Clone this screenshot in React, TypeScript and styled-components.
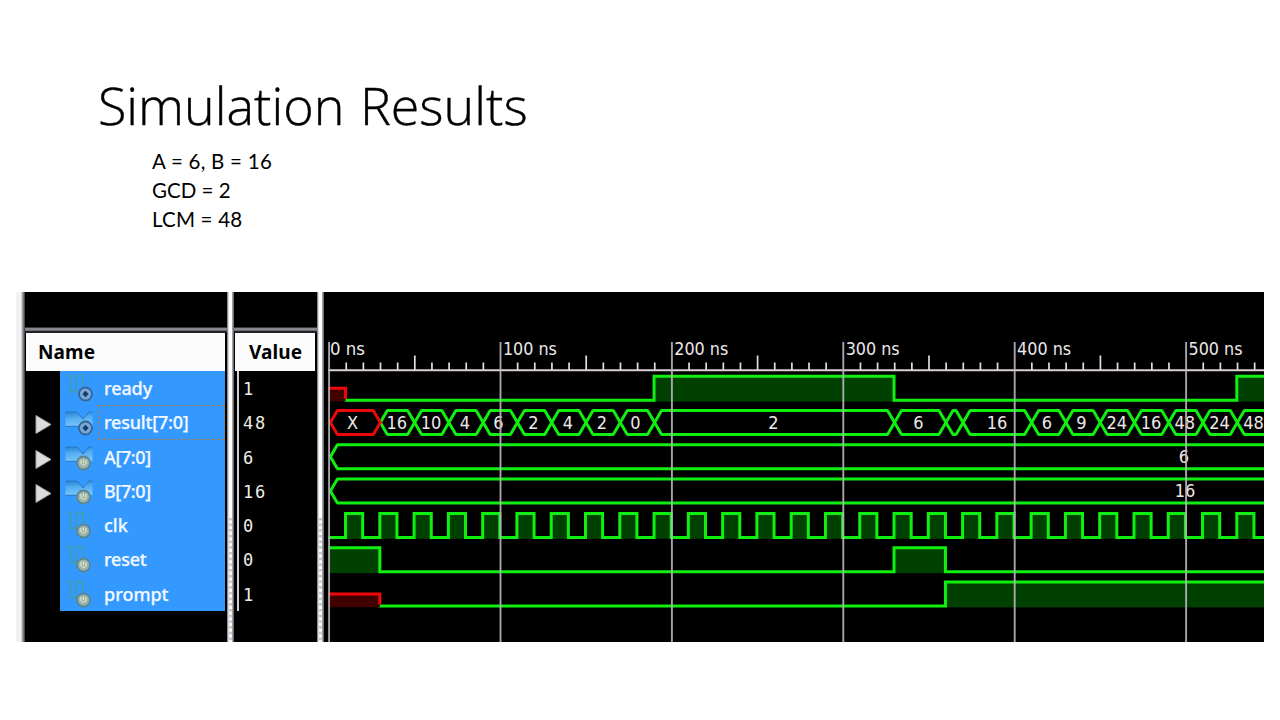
import React from "react";
import styled, { createGlobalStyle } from "styled-components";

const GlobalStyle = createGlobalStyle`
  body { margin: 0; background: #fff; }
  * { box-sizing: border-box; }
`;

const Slide = styled.main`
  width: 1280px;
  height: 720px;
  overflow: hidden;
  display: flex;
  flex-direction: column;
  background: #fff;
  color: #000;
`;

const Heading = styled.header`
  height: 292px;
  flex: none;
  padding: 70px 0 0 98px;
`;

const Title = styled.h1`
  margin: 0;
  font: 300 52px/70px "Open Sans", sans-serif;
  word-spacing: 2px;
  -webkit-text-stroke: 0.4px #000;
  white-space: nowrap;
`;

const Facts = styled.div`
  padding: 7px 0 0 54px;
  font: 400 20.5px/29px Lato, sans-serif;
  font-variant-ligatures: none;
  white-space: nowrap;
`;

const Fact = styled.div<{ $spacing: number }>`
  letter-spacing: ${(p) => p.$spacing}px;
  width: max-content;
`;

const Simulator = styled.section`
  display: grid;
  grid-template-columns: 9px 202px 7px 83px 7px 940px;
  width: 1248px;
  height: 350px;
  margin-left: 16px;
  background: #000;
  overflow: hidden;
`;

const Edge = styled.div`
  background: linear-gradient(90deg, #f2f2f2 0 5px, #b4b4b8 6px, #77777c 7.5px, #77777c 8px, #1c1c20 9px);
`;

const Splitter = styled.div`
  display: flex;
  flex-direction: column;
  justify-content: flex-end;
  padding: 0 2px 0 2px;
  background: linear-gradient(90deg, #66666e 0, #b0b0b8 1px, #fff 2px, #fff calc(100% - 2.5px), #a0a0a8 calc(100% - 1.5px), #55555c 100%);
`;

const Grip = styled.div`
  height: 124px;
  background: repeating-linear-gradient(180deg, #c8c8cc 0 1.5px, #f8f8f8 3px 5px, #dcdce0 5.7px);
`;

const Column = styled.div`
  display: flex;
  flex-direction: column;
`;

const ColumnTop = styled.div`
  height: 41px;
  flex: none;
  border-bottom: 2px solid #202024;
  background: linear-gradient(180deg, #000 0 35px, #77777c 36px, #96969c 37px, #606066 39px);
`;

const ColumnHeader = styled.div<{ $inset: number; $spacing: number }>`
  height: 38px;
  flex: none;
  margin: 0 2px 0 1.4px;
  padding-left: ${(p) => p.$inset}px;
  background: #fcfcfc;
  font: 700 19px/38px "Noto Sans", sans-serif;
  letter-spacing: ${(p) => p.$spacing}px;
`;

const NameRows = styled.div`
  display: flex;
  flex-direction: column;
  height: 240px;
`;

const NameRow = styled.div`
  display: grid;
  grid-template-columns: 35px 38px 1fr;
  grid-template-rows: 34.3px;
  height: 34.3px;
  margin-right: 2px;
`;

const Expander = styled.div`
  display: flex;
  align-items: center;
  padding: 5px 0 0 9.5px;
`;

const IconCell = styled.div`
  padding-left: 4px;
  background: #3399ff;
`;

const SignalName = styled.div<{ $focused?: boolean; $spacing: number }>`
  padding: 1px 0 0 6px;
  background: #3399ff;
  color: #f2f8ff;
  font: 500 18px/32px "Noto Sans", sans-serif;
  letter-spacing: ${(p) => p.$spacing}px;
  -webkit-text-stroke: 0.25px #f2f8ff;
  outline: ${(p) => (p.$focused ? "1px dashed #a87c50" : "none")};
  outline-offset: -1px;
`;

const ValueRows = styled.div`
  display: flex;
  flex-direction: column;
  height: 240px;
  margin-left: 3px;
  border-left: 2px solid #d0d0d0;
`;

const ValueRow = styled.div`
  height: 34.3px;
  padding-left: 4px;
  color: #f0ece4;
  font: 400 17px/36px "DejaVu Sans Mono", monospace;
  letter-spacing: 1.8px;
`;

const Chart = styled.svg`
  display: block;
  width: 940px;
  height: 350px;
`;

const ChartText = styled.text`
  fill: #ece8e8;
  font: 400 18px "DejaVu Sans Condensed", "DejaVu Sans", sans-serif;
`;

type Signal = { name: string; value: string; bus?: boolean; out?: boolean; spacing: number };

const signals: Signal[] = [
  { name: "ready", value: "1", out: true, spacing: -0.1 },
  { name: "result[7:0]", value: "48", bus: true, out: true, spacing: -0.2 },
  { name: "A[7:0]", value: "6", bus: true, spacing: -0.4 },
  { name: "B[7:0]", value: "16", bus: true, spacing: -0.4 },
  { name: "clk", value: "0", spacing: 0 },
  { name: "reset", value: "0", spacing: -0.2 },
  { name: "prompt", value: "1", spacing: 0 },
];

const Glyph = styled.svg`
  display: block;
`;

const Arrow = () => (
  <Glyph width="18" height="21" viewBox="0 0 18 21">
    <path d="M1 1.5L16 10.5L1 19.5Z" fill="#dcdcdc" stroke="#a4a4a4" strokeWidth="1" />
  </Glyph>
);

const SignalIcon = ({ bus, out }: { bus?: boolean; out?: boolean }) => (
  <Glyph width="30" height="34" viewBox="0 0 30 34">
    <defs>
      <linearGradient id="busFill" x1="0" y1="0" x2="0.15" y2="1">
        <stop offset="0" stopColor="#2580d2" />
        <stop offset="0.45" stopColor="#52acf2" />
        <stop offset="1" stopColor="#78c2f8" />
      </linearGradient>
    </defs>
    {bus ? (
      <>
        <path d="M1.5 7H13L19 14L25 7H28.5V21H22L18 17L14 21H1.5Z" fill="url(#busFill)" />
        <path d="M1.5 7H13L19 14L25 7H28.5M1.5 21.3H14" fill="none" stroke="#2879c2" strokeWidth="1" />
      </>
    ) : (
      <path d="M2 4.7H6.5V20.5H12V4.7H19V15" fill="none" stroke="#419db4" strokeWidth="1.8" />
    )}
    <circle cx={out ? 21.5 : 19.5} cy="23" r="6.5" fill={out ? "#78a8da" : "#9ab4ac"} stroke={out ? "#366694" : "#5a8694"} strokeWidth="1.8" />
    {out ? (
      <path d="M21.5 19.8L24.7 23L21.5 26.2L18.3 23Z" fill="#183c64" />
    ) : (
      <path d="M17 20V23.5Q19.5 27 22 23.5V20M19.5 19.5V23" fill="none" stroke="#e0e6c8" strokeWidth="1.2" />
    )}
  </Glyph>
);

const LEFT = 324;
const TOP = 292;
const PX = 1.714;
const GREEN = "#10f010";
const FILL = "#004000";
const END = 550;

const px = (t: number) => 328.4 - LEFT + t * PX;
const rowTop = (row: number) => 376.2 - TOP + row * 34.3;

/* Digital trace: list of [time, level] changes, running on to the chart's end. */
const Trace = ({ row, steps }: { row: number; steps: [number, number][] }) => {
  const high = rowTop(row);
  const low = high + 24;
  let d = "";
  steps.forEach(([t, level], i) => {
    const y = level ? high : low;
    const next = i + 1 < steps.length ? steps[i + 1][0] : END;
    d += `${i ? "L" : "M"}${px(t)} ${y}L${px(next)} ${y}`;
  });
  return (
    <g>
      {steps.map(([t, level], i) =>
        level ? (
          <rect key={i} x={px(t)} y={high} width={px(i + 1 < steps.length ? steps[i + 1][0] : END) - px(t)} height={25.4} fill={FILL} />
        ) : null
      )}
      <path d={d} fill="none" stroke={GREEN} strokeWidth="3" />
    </g>
  );
};

const Unknown = ({ row, until }: { row: number; until: number }) => {
  const y = rowTop(row) + 12;
  return (
    <g>
      <rect x={px(0)} y={y} width={px(until) - px(0)} height={13.2} fill="#400000" />
      <path d={`M${px(0)} ${y}H${px(until)}V${y + 10.6}`} fill="none" stroke="#f00808" strokeWidth="3" />
    </g>
  );
};

const Bus = ({ row, from, to, color = GREEN }: { row: number; from: number; to: number; color?: string }) => {
  const y = rowTop(row);
  const a = px(from) + (from ? 0.5 : 2);
  const b = px(to) + 0.5;
  const s = Math.min(7, (b - a) / 2);
  return (
    <path
      d={`M${a} ${y + 12}L${a + s} ${y}H${b - s}L${b} ${y + 12}L${b - s} ${y + 24}H${a + s}Z`}
      fill="none"
      stroke={color}
      strokeWidth="3"
      strokeLinejoin="bevel"
    />
  );
};

const resultSegments: [number, number, string, number][] = [
  [0, 30, "X", 352.5],
  [30, 50, "16", 396.8],
  [50, 70, "10", 431],
  [70, 90, "4", 465],
  [90, 110, "6", 498.5],
  [110, 130, "2", 533.5],
  [130, 150, "4", 568],
  [150, 170, "2", 602],
  [170, 190, "0", 635.5],
  [190, 330, "2", 773.5],
  [330, 360, "6", 918.5],
  [360, 370, "", 0],
  [370, 410, "16", 997],
  [410, 430, "6", 1047],
  [430, 450, "9", 1081.5],
  [450, 470, "24", 1116.8],
  [470, 490, "16", 1151],
  [490, 510, "48", 1184.8],
  [510, 530, "24", 1219.5],
  [530, 560, "48", 1253.5],
];

const clock: [number, number][] = Array.from({ length: 55 }, (_, i) => [i * 10, i % 2] as [number, number]);

const Label = ({ x, row, children }: { x: number; row: number; children: string }) => (
  <ChartText x={x - LEFT} y={rowTop(row) + 18.3} textAnchor="middle">
    {children}
  </ChartText>
);

const Waveforms = () => (
  <Chart viewBox="0 0 940 350">
    {[0, 100, 200, 300, 400, 500].map((t) => (
      <ChartText key={t} x={(t ? 331.5 : 330) - LEFT + t * PX} y="63" textLength={t ? 54 : 35} lengthAdjust="spacingAndGlyphs">
        {`${t} ns`}
      </ChartText>
    ))}
    <Trace row={0} steps={[[9, 0], [190, 1], [330, 0], [530, 1]]} />
    <Unknown row={0} until={10} />
    {resultSegments.slice(1).map(([from, to]) => (
      <Bus key={from} row={1} from={from} to={to} />
    ))}
    <Bus row={1} from={0} to={30} color="#f00808" />
    <Bus row={2} from={0} to={600} />
    <Bus row={3} from={0} to={600} />
    <Trace row={4} steps={clock} />
    <Trace row={5} steps={[[0, 1], [30, 0], [330, 1], [360, 0]]} />
    <Trace row={6} steps={[[29, 0], [360, 1]]} />
    <Unknown row={6} until={30} />
    {resultSegments.map(([from, , label, x]) =>
      label ? (
        <Label key={from} x={x} row={1}>
          {label}
        </Label>
      ) : null
    )}
    <Label x={1184} row={2}>6</Label>
    <Label x={1185} row={3}>16</Label>
    <path d="M4 78.2H940" stroke="#d8d0d0" strokeWidth="2" />
    {Array.from({ length: 55 }, (_, i) =>
      i % 10 ? (
        <path key={i} d={`M${5.1 + i * 10 * PX} ${i % 5 ? 70.5 : 63.5}V78`} stroke="#e0e0e0" strokeWidth="1.7" />
      ) : (
        <path key={i} d={`M${5.1 + i * 10 * PX} 50V350`} stroke="#bcb4bc" strokeOpacity="0.9" strokeWidth="1.9" />
      )
    )}
  </Chart>
);

export default function App() {
  return (
    <>
      <GlobalStyle />
      <Slide>
        <Heading>
          <Title>Simulation Results</Title>
          <Facts>
            <Fact $spacing={0.25}>A = 6, B = 16</Fact>
            <Fact $spacing={0}>GCD = 2</Fact>
            <Fact $spacing={0.2}>LCM = 48</Fact>
          </Facts>
        </Heading>
        <Simulator>
          <Edge />
          <Column>
            <ColumnTop />
            <ColumnHeader $inset={11.6} $spacing={0.1}>Name</ColumnHeader>
            <NameRows>
              {signals.map((s) => (
                <NameRow key={s.name}>
                  <Expander>{s.bus && <Arrow />}</Expander>
                  <IconCell>
                    <SignalIcon bus={s.bus} out={s.out} />
                  </IconCell>
                  <SignalName $focused={s.name === "result[7:0]"} $spacing={s.spacing}>
                    {s.name}
                  </SignalName>
                </NameRow>
              ))}
            </NameRows>
          </Column>
          <Splitter><Grip /></Splitter>
          <Column>
            <ColumnTop />
            <ColumnHeader $inset={13.5} $spacing={0.1}>Value</ColumnHeader>
            <ValueRows>
              {signals.map((s) => (
                <ValueRow key={s.name}>{s.value}</ValueRow>
              ))}
            </ValueRows>
          </Column>
          <Splitter><Grip /></Splitter>
          <Waveforms />
        </Simulator>
      </Slide>
    </>
  );
}
